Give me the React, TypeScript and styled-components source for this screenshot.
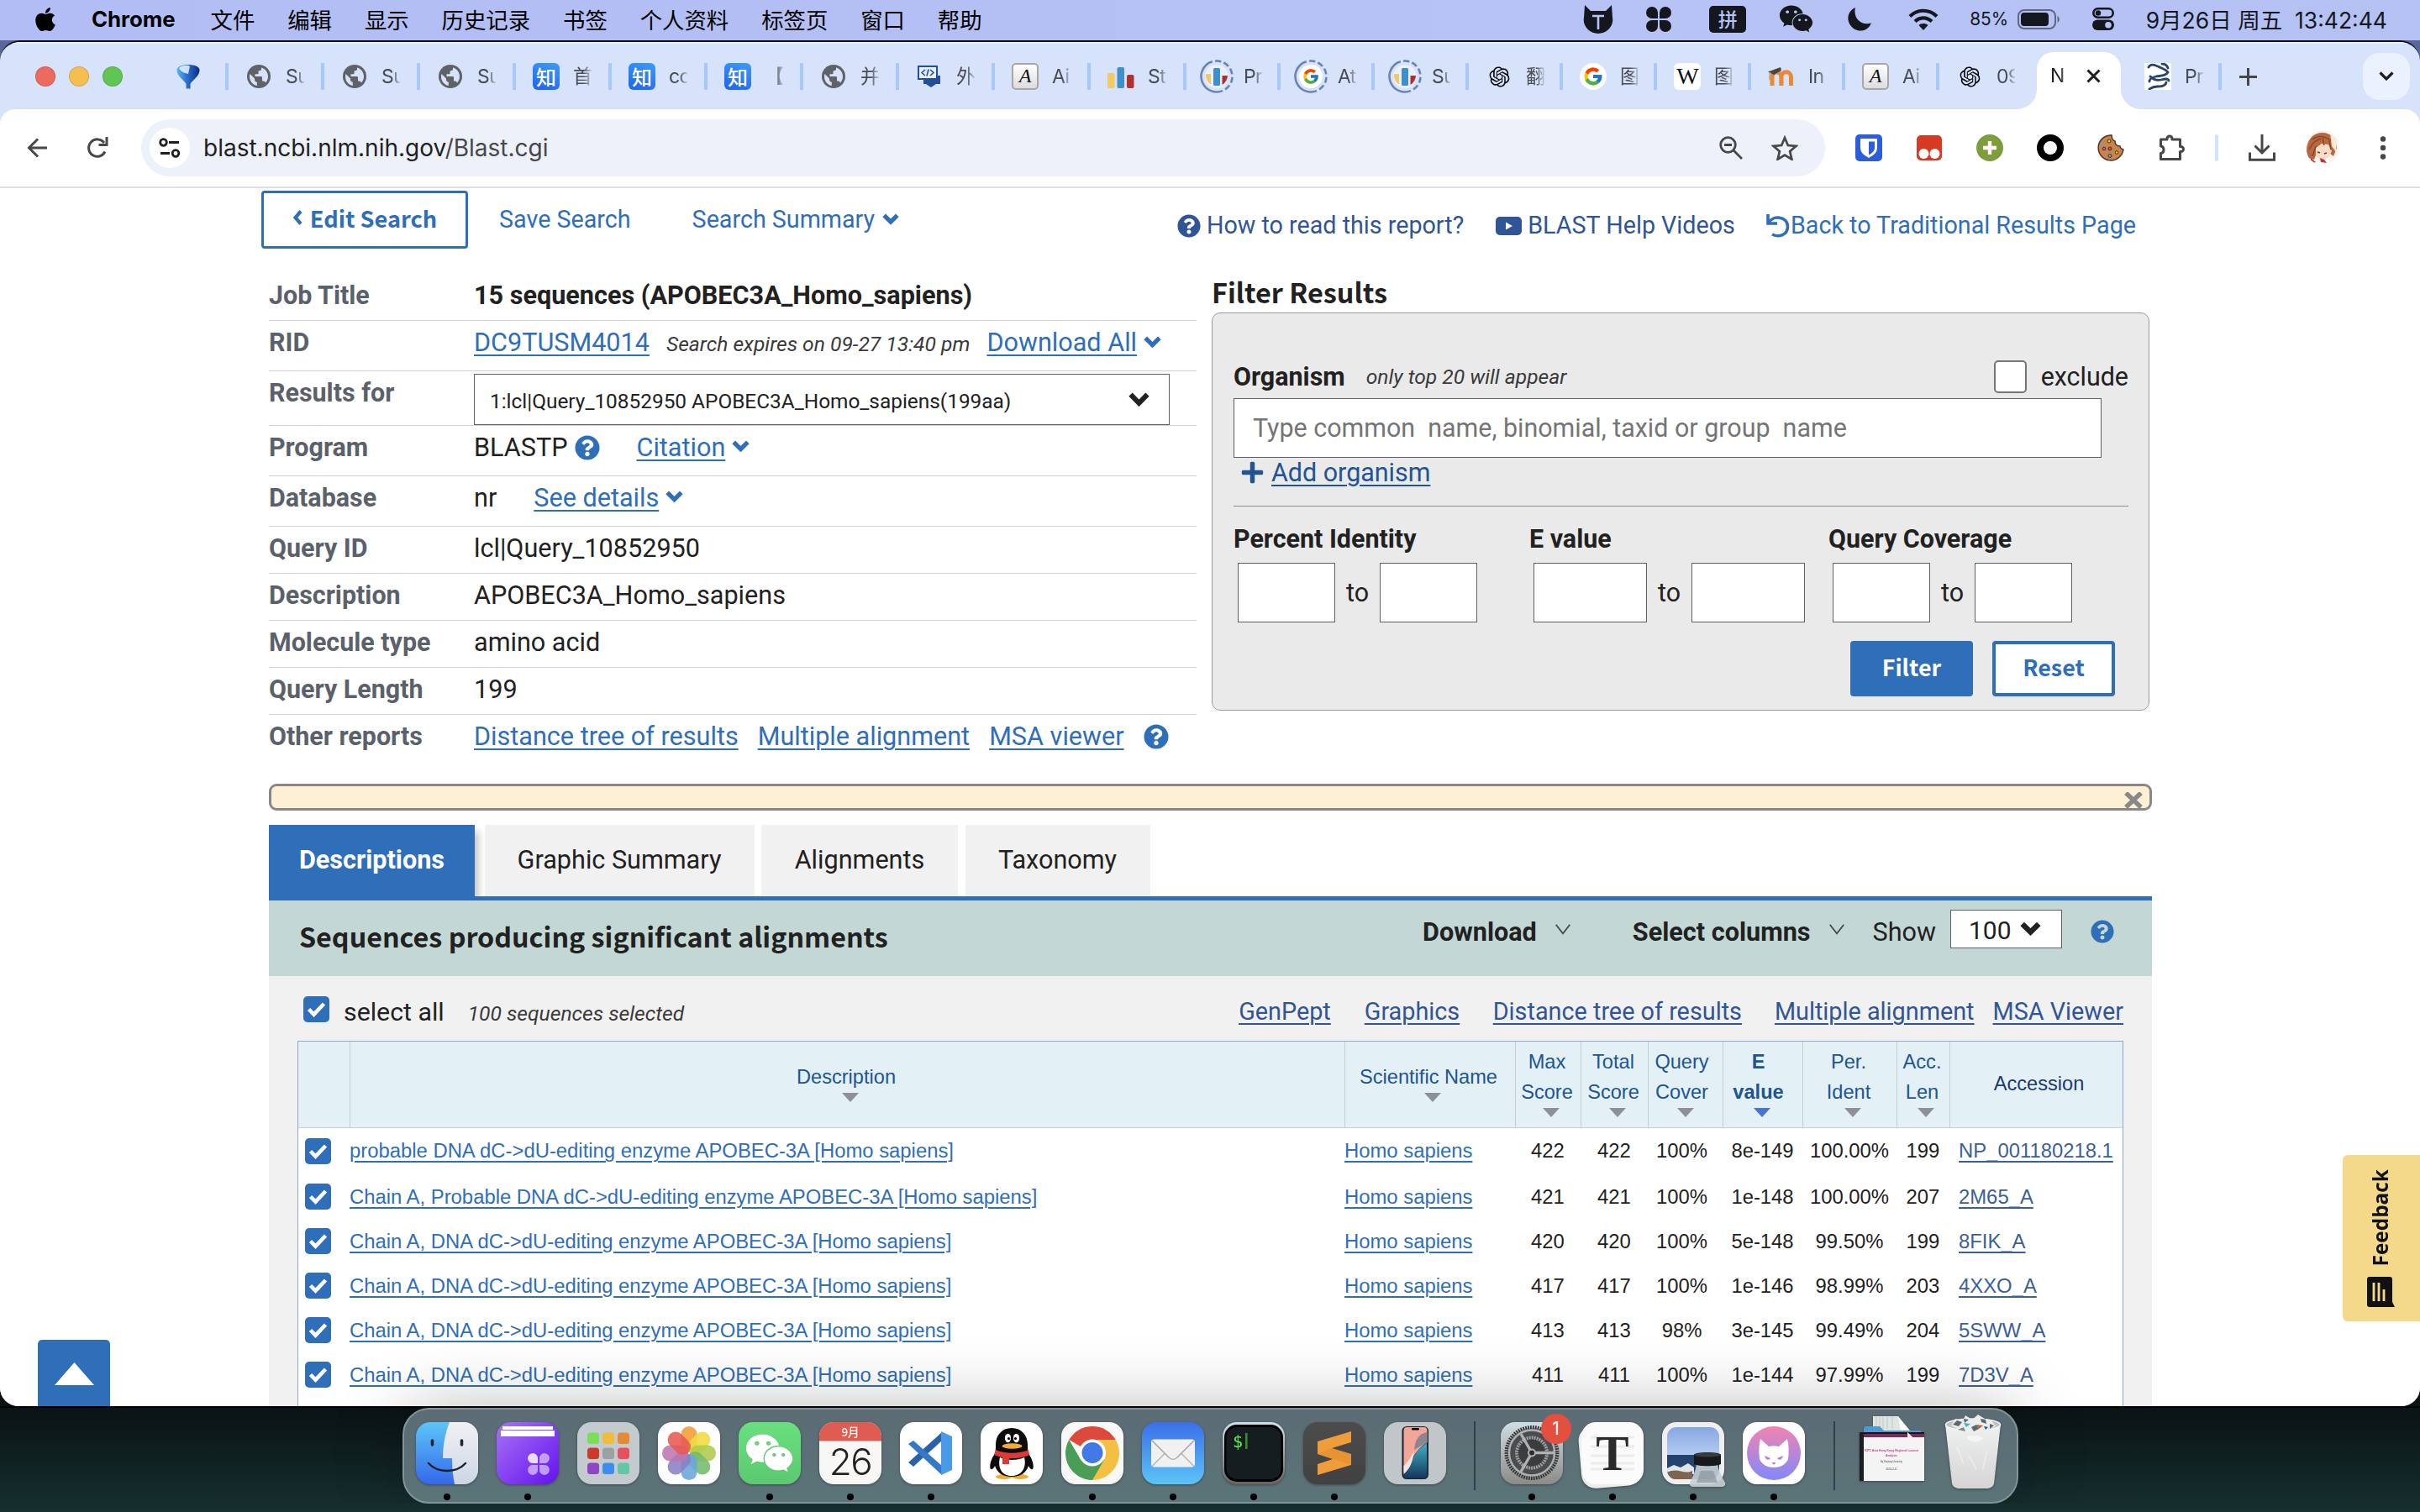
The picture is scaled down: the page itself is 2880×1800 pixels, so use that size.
import React from 'react';
import styled, { createGlobalStyle, css } from 'styled-components';
import { FaApple, FaQuestionCircle, FaWeixin, FaPlus } from 'react-icons/fa';
import { FcGoogle } from 'react-icons/fc';
import { RiOpenaiFill } from 'react-icons/ri';

const BLUE = '#2f6eb8';
const VISITED = '#2f5597';
const ROBOTO = '"Roboto", "Noto Sans CJK SC", sans-serif';
const SYSTEM = '"Inter", "Noto Sans CJK SC", sans-serif';
const HEADING = '"Noto Sans CJK SC", "Open Sans", sans-serif';
const ARIAL = '"Liberation Sans", Arial, sans-serif';

const GlobalStyle = createGlobalStyle`
  *, *::before, *::after { box-sizing: border-box; }
  body { margin: 0; overflow: hidden; font-family: ${ROBOTO}; color: #212121; }
  svg { display: block; flex: none; }
`;

const Desktop = styled.div`
  width: 2880px;
  height: 1800px;
  display: flex;
  flex-direction: column;
  overflow: hidden;
  background: linear-gradient(180deg, #5b679a 0, #5b679a 200px, #05090b 1600px, #0b1517 1690px, #16302f 1800px);
`;

/* ---------- macOS menu bar ---------- */
const MenuBar = styled.header`
  flex: none;
  height: 48px;
  padding: 0 39px 3px 38px;
  display: flex;
  align-items: center;
  justify-content: space-between;
  background: linear-gradient(90deg, #b1bdf4, #b7c3f4 70%, #b5c1f3);
  font: 26.4px ${SYSTEM};
  color: #000;
  white-space: pre;
`;
const Menus = styled.nav`
  display: flex;
  align-items: center;
  gap: 38.9px;
`;
const AppName = styled.strong`
  font-weight: 700;
  font-size: 25.8px;
  margin: 0 3px 0 0;
`;
const Status = styled.div`
  display: flex;
  align-items: center;
  color: #15171f;
`;
const StatusItem = styled.span<{ $gap: number; $size?: number }>`
  margin-left: ${p => p.$gap}px;
  font-size: ${p => p.$size ?? 26.4}px;
`;
const InputMethod = styled.span`
  margin-left: 45px;
  width: 44px;
  height: 32px;
  border-radius: 5px;
  background: #15171f;
  color: #b7c3f4;
  font: 500 23px/30px "Noto Sans CJK SC", sans-serif;
  text-align: center;
`;

/* ---------- browser window ---------- */
const Window = styled.main`
  flex: none;
  height: 1626px;
  display: flex;
  flex-direction: column;
  overflow: hidden;
  position: relative;
  border-top: 2px solid #0b0d14;
  border-radius: 24px 24px 22px 22px;
  background: #d7e2fb;
`;
const TabStrip = styled.div`
  flex: none;
  height: 80px;
  padding-left: 42px;
  display: flex;
  align-items: center;
  border-top: 2px solid #e9f0fd;
`;
const Lights = styled.div`
  display: flex;
  gap: 16px;
`;
const Light = styled.i<{ $color: string }>`
  width: 24px;
  height: 24px;
  border-radius: 50%;
  background: ${p => p.$color};
  box-shadow: inset 0 0 0 1px rgba(0, 0, 0, 0.12);
`;
const PinnedTab = styled.div`
  margin: 0 28px 0 62px;
  width: 32px;
`;
const tabBase = css`
  height: 32px;
  display: flex;
  align-items: center;
  flex: none;
`;
const Tab = styled.div<{ $wide?: boolean; $first?: boolean }>`
  ${tabBase}
  width: ${p => (p.$wide ? 114 : 112)}px;
  padding-left: 20px;
  gap: 16px;
  border-left: 4px solid ${p => (p.$first ? 'transparent' : '#a8c7fa')};
`;
const Favicon = styled.span`
  width: 32px;
  height: 32px;
  display: flex;
  align-items: center;
  justify-content: center;
`;
const TabTitle = styled.span<{ $strong?: boolean }>`
  width: 22px;
  overflow: hidden;
  white-space: nowrap;
  font: 23px/32px ${SYSTEM};
  letter-spacing: -0.6px;
  color: ${p => (p.$strong ? '#1f1f1f' : '#474b52')};
  mask-image: linear-gradient(90deg, #000 55%, rgba(0, 0, 0, 0.15) 100%);
`;
const ActiveTab = styled.div`
  flex: none;
  position: relative;
  align-self: flex-end;
  width: 100px;
  height: 68px;
  margin: 0 4px 0 8px;
  padding: 0 24px 12px 16px;
  display: flex;
  align-items: center;
  justify-content: space-between;
  border-radius: 20px 20px 0 0;
  background: #fff;
  &::before, &::after {
    content: '';
    position: absolute;
    bottom: 0;
    width: 24px;
    height: 24px;
  }
  &::before { right: 100%; background: radial-gradient(circle at 0 0, transparent 23.5px, #fff 24.5px); }
  &::after { left: 100%; background: radial-gradient(circle at 100% 0, transparent 23.5px, #fff 24.5px); }
`;
const NewTab = styled.div`
  ${tabBase}
  border-left: 4px solid #a8c7fa;
  padding-left: 21px;
`;
const TabSearch = styled.div`
  margin: 0 12px 0 auto;
  width: 56px;
  height: 56px;
  border-radius: 20px;
  background: #ebf2fd;
  display: flex;
  align-items: center;
  justify-content: center;
`;
const Toolbar = styled.div`
  flex: none;
  height: 94px;
  padding: 0 8px;
  display: flex;
  align-items: center;
  border-bottom: 2px solid #dfe1e3;
  border-radius: 18px 18px 0 0;
  background: #fff;
`;
const ToolButton = styled.span<{ $w?: number }>`
  flex: none;
  width: ${p => p.$w ?? 72}px;
  display: flex;
  justify-content: center;
`;
const Omnibox = styled.div`
  flex: none;
  width: 2004px;
  height: 68px;
  margin: 0 16px;
  padding: 0 16px 0 10px;
  display: flex;
  align-items: center;
  border-radius: 34px;
  background: #edf1fa;
`;
const SiteInfo = styled.span`
  width: 48px;
  height: 48px;
  border-radius: 50%;
  background: #fff;
  display: flex;
  align-items: center;
  justify-content: center;
`;
const Url = styled.span`
  flex: 1;
  margin-left: 16px;
  font: 28px ${SYSTEM};
  color: #1f1f1f;
  span { color: #474747; }
`;
const ToolDivider = styled.i`
  width: 4px;
  height: 32px;
  margin: 0 16px;
  border-radius: 2px;
  background: #d3e3fd;
`;

/* ---------- BLAST page ---------- */
const Page = styled.div`
  flex: 1;
  min-height: 0;
  overflow: hidden;
  padding: 3px 319px 0 320px;
  display: flex;
  flex-direction: column;
  background: #fff;
`;
const ActionRow = styled.div`
  flex: none;
  height: 99px;
  margin-left: -9px;
  display: flex;
  align-items: flex-start;
  font-size: 28.7px;
  line-height: 69px;
  color: ${BLUE};
`;
const EditSearch = styled.button`
  width: 246px;
  height: 69px;
  padding: 0 0 5px;
  display: flex;
  align-items: center;
  justify-content: center;
  gap: 9px;
  border: 3px solid ${BLUE};
  border-radius: 4px;
  background: #fff;
  color: ${BLUE};
  font: 700 27.2px ${HEADING};
`;
const Action = styled.a<{ $gap: number }>`
  display: flex;
  align-items: center;
  gap: 9px;
  margin-left: ${p => p.$gap}px;
  svg { margin-bottom: 2px; }
`;
const HelpLinks = styled.div`
  margin: 7px 19px 0 auto;
  display: flex;
`;
const HelpLink = styled.a<{ $gap?: number; $left?: number; $color: string }>`
  display: flex;
  align-items: center;
  gap: ${p => p.$gap ?? 7}px;
  margin-left: ${p => p.$left ?? 0}px;
  color: ${p => p.$color};
`;
const Columns = styled.div`
  flex: none;
  height: 607px;
  display: grid;
  grid-template-columns: 1104px 1116px;
  column-gap: 18px;
`;
const Summary = styled.dl`
  margin: 0;
  font-size: 30.6px;
`;
const SummaryRow = styled.div<{ $h: number; $last?: boolean }>`
  height: ${p => p.$h}px;
  padding-top: 7px;
  display: flex;
  align-items: flex-start;
  line-height: 37px;
  border-bottom: ${p => (p.$last ? 0 : 1)}px solid #cfd1d3;
`;
const Label = styled.dt`
  width: 244px;
  font-weight: 700;
  font-size: 30.45px;
  color: #5b616b;
`;
const Value = styled.dd<{ $bold?: boolean }>`
  margin: 0;
  display: flex;
  font-weight: ${p => (p.$bold ? 700 : 400)};
  white-space: nowrap;
`;
const underline = css`
  text-decoration: underline;
  text-decoration-thickness: 2px;
  text-underline-offset: 4px;
`;
const Link = styled.a<{ $gap?: number; $color?: string }>`
  ${underline}
  margin-left: ${p => p.$gap ?? 0}px;
  color: ${p => p.$color ?? BLUE};
`;
const Note = styled.em<{ $gap: number; $drop?: number }>`
  margin-left: ${p => p.$gap}px;
  padding-top: ${p => p.$drop ?? 0}px;
  font-size: 24.65px;
  color: #3a3a3a;
`;
const Mark = styled.span<{ $gap: number; $lift?: number }>`
  display: flex;
  align-items: center;
  margin-left: ${p => p.$gap}px;
  padding-bottom: ${p => p.$lift ?? 0}px;
  color: ${BLUE};
`;
const QuerySelect = styled.div`
  width: 828px;
  height: 61px;
  margin-top: -4px;
  padding: 4px 23px 0 18px;
  display: flex;
  align-items: center;
  justify-content: space-between;
  border: 1px solid #5b616b;
  background: #fff;
  font-size: 24.4px;
  svg { margin-bottom: 4px; }
`;
const FilterHeading = styled.h2`
  margin: 0;
  height: 46px;
  font: 700 32.4px/41px ${HEADING};
`;
const FilterPanel = styled.section`
  height: 474px;
  padding: 55px 24px 0 25px;
  border: 1px solid #999b9d;
  border-radius: 10px;
  background: #eaeaea;
  font-size: 30.45px;
`;
const OrganismRow = styled.div`
  height: 46px;
  display: flex;
  align-items: flex-start;
  line-height: 42px;
`;
const Exclude = styled.label`
  margin-left: auto;
  display: flex;
  gap: 17px;
`;
const EmptyCheck = styled.i`
  width: 39px;
  height: 39px;
  margin-top: 1px;
  border: 2px solid #767676;
  border-radius: 5px;
  background: #fff;
`;
const Field = styled.div<{ $w: number }>`
  width: ${p => p.$w}px;
  height: 71px;
  padding-left: 22px;
  border: 1px solid #5b616b;
  background: #fff;
  color: #757575;
  line-height: 70px;
  white-space: pre;
`;
const AddOrganism = styled.div`
  height: 58px;
  padding: 0 0 23px 8px;
  display: flex;
  align-items: center;
  gap: 8px;
  color: #205493;
  border-bottom: 1px solid #8c8d8f;
`;
const Ranges = styled.div`
  display: grid;
  grid-template-columns: 352px 356px 1fr;
  padding-top: 20px;
`;
const RangeLabel = styled.div`
  height: 47px;
  line-height: 37px;
  font-weight: 700;
`;
const RangeInputs = styled.div`
  display: flex;
  align-items: center;
  gap: 13px;
  padding-left: 5px;
`;
const PanelButtons = styled.div`
  margin: 22px 16px 0 0;
  display: flex;
  justify-content: flex-end;
  gap: 23px;
`;
const PanelButton = styled.button<{ $solid?: boolean }>`
  width: 146px;
  height: 66px;
  padding: 0 0 6px;
  border: 4px solid ${BLUE};
  border-radius: 4px;
  background: ${p => (p.$solid ? BLUE : '#fff')};
  color: ${p => (p.$solid ? '#fff' : BLUE)};
  font: 700 26.9px ${HEADING};
`;
const Notice = styled.div`
  flex: none;
  height: 32px;
  margin-bottom: 17px;
  padding: 7px 8px 0 0;
  display: flex;
  justify-content: flex-end;
  border: 3px solid #888;
  border-radius: 9px;
  background: #fdf0d5;
`;
const ResultTabs = styled.div`
  flex: none;
  height: 90px;
  display: flex;
  gap: 8.5px;
  border-bottom: 5px solid ${BLUE};
  font-size: 30.6px;
`;
const ResultTab = styled.div<{ $w: number; $active?: boolean }>`
  width: ${p => p.$w}px;
  text-align: center;
  line-height: 84px;
  background: #f1f1f1;
  ${p => p.$active && css`
    margin-right: 3px;
    background: ${BLUE};
    color: #fff;
    font-weight: 700;
    box-shadow: 7px 6px 8px -2px rgba(0, 0, 0, 0.22);
    clip-path: inset(0 -12px 0 0);
  `}
`;
const SectionBar = styled.div`
  flex: none;
  height: 90px;
  padding: 0 45px 16px 36px;
  display: flex;
  align-items: center;
  background: #c3d8d5;
  font-size: 30.6px;
  h2 { margin: 10px auto 0 0; font: 700 32.25px/50px ${HEADING}; }
`;
const BarMenu = styled.b<{ $right: number }>`
  display: flex;
  align-items: center;
  gap: 22px;
  margin-right: ${p => p.$right}px;
  svg { color: #444; margin-bottom: 5px; }
`;
const ShowSelect = styled.div`
  width: 133px;
  height: 46px;
  margin: -7px 34px 0 17px;
  padding: 4px 0 0 21px;
  display: flex;
  align-items: center;
  gap: 10px;
  border: 1px solid #5b616b;
  background: #fff;
  font-size: 30px;
  svg { margin-bottom: 4px; }
`;
const ResultsPanel = styled.section`
  flex: 1;
  min-height: 0;
  padding: 0 34px;
  display: flex;
  flex-direction: column;
  background: #f1f1f1;
`;
const SelectRow = styled.div`
  flex: none;
  height: 77px;
  padding: 24px 0 0 7px;
  display: flex;
  align-items: flex-start;
  line-height: 38px;
  font-size: 30.3px;
`;
const SelectLabel = styled.span`
  margin-left: 17px;
`;
const ViewLinks = styled.nav`
  margin-left: auto;
  display: flex;
  font-size: 28.8px;
  line-height: 37px;
`;
const ResultTable = styled.div`
  flex: 1;
  border: 1px solid #8fa9c9;
  border-bottom: 0;
  background: #fff;
  font: 23.85px ${ARIAL};
`;
const tableGrid = css`
  display: grid;
  grid-template-columns: 61px 1184px 203px 78px 80px 89px 95px 112px 63px 206px;
`;
const HeadRow = styled.div`
  ${tableGrid}
  height: 103px;
  background: #e3f1f6;
  border-bottom: 1px solid #c9d5da;
  font-size: 23.6px;
`;
const HeadCell = styled.div<{ $top: number; $right?: number; $left?: number; $bold?: boolean; $color?: string }>`
  display: flex;
  flex-direction: column;
  align-items: center;
  padding: ${p => p.$top}px ${p => p.$right ?? 3}px 0 ${p => p.$left ?? 0}px;
  border-left: 1px solid #c6cdd2;
  line-height: 36px;
  text-align: center;
  white-space: pre;
  color: ${p => p.$color ?? '#205493'};
  font-weight: ${p => (p.$bold ? 700 : 400)};
  &:first-child { border-left: 0; }
`;
const SortArrow = styled.i<{ $active?: boolean }>`
  margin: 1px 0 0 9px;
  border: 10px solid transparent;
  border-top: 11px solid ${p => (p.$active ? '#4773d2' : '#8e9099')};
  border-bottom: 0;
`;
const BodyRow = styled.div`
  ${tableGrid}
  height: 53px;
  align-items: center;
  &:nth-child(2) { height: 55px; padding-bottom: 1px; }
`;
const Num = styled.span<{ $shift?: number }>`
  text-align: center;
  padding-right: ${p => p.$shift ?? 0}px;
`;
const AccessionCell = styled.span`
  padding-left: 11px;
`;
const CheckBox = styled.span<{ $left?: number }>`
  width: 31px;
  height: 31px;
  margin-left: ${p => p.$left ?? 0}px;
  border-radius: 5px;
  background: ${BLUE};
  display: flex;
  align-items: center;
  justify-content: center;
`;
const Feedback = styled.div`
  position: absolute;
  right: 0;
  top: 1325px;
  width: 92px;
  height: 198px;
  padding: 17px 2px 0 0;
  display: flex;
  flex-direction: column;
  align-items: center;
  gap: 13px;
  border-radius: 6px 0 0 6px;
  background: #f5d98b;
  color: #111;
  span {
    writing-mode: vertical-rl;
    transform: rotate(180deg);
    font: 700 24.4px/34px "Open Sans", sans-serif;
  }
`;
const ToTop = styled.div`
  position: absolute;
  left: 45px;
  bottom: 0;
  width: 86px;
  height: 79px;
  padding: 27px 0 0 20px;
  border-radius: 5px 5px 0 0;
  background: ${BLUE};
`;

/* ---------- dock ---------- */
const DockArea = styled.div`
  flex: 1;
  display: flex;
  justify-content: center;
  align-items: flex-start;
  border-top: 2px solid #000;
`;
const Dock = styled.div`
  position: relative;
  z-index: 2;
  width: 1923px;
  height: 114px;
  padding: 0 0 0 14px;
  display: flex;
  border: 2px solid #82949a;
  border-radius: 32px;
  background: linear-gradient(180deg, #5c6c74, #5a7478);
  box-shadow: 0 0 90px -8px rgba(0, 0, 0, 0.32);
  clip-path: inset(-140px -140px 0 -140px);
`;
const DockItem = styled.div<{ $running?: boolean; $gap?: number }>`
  position: relative;
  flex: none;
  width: 74px;
  margin-right: ${p => p.$gap ?? 22}px;
  padding-top: 15px;
  &::after {
    content: '';
    display: ${p => (p.$running ? 'block' : 'none')};
    width: 8px;
    height: 8px;
    margin: 11px auto 0;
    border-radius: 50%;
    background: #000;
  }
  svg { overflow: visible; filter: drop-shadow(0 1px 1.5px rgba(0, 0, 0, 0.35)); }
`;
const Badge = styled.span`
  position: absolute;
  left: 48px;
  top: 5px;
  width: 36px;
  height: 36px;
  border-radius: 50%;
  background: #e3503f;
  color: #fff;
  font: 21px/36px ${SYSTEM};
  text-align: center;
`;
const DockDivider = styled.i<{ $right: number; $left: number }>`
  width: 2px;
  height: 82px;
  margin: 14px ${p => p.$right}px 0 ${p => p.$left}px;
  background: #2c434c;
`;

/* ---------- small drawings ---------- */
const Chevron = ({ w = 20, s = 5.2 }: { w?: number; s?: number }) => (
  <svg width={w} height={w * 0.7} viewBox={`0 0 ${w} ${w * 0.7}`}>
    <path d={`M${s / 2.4} ${s / 2.2}L${w / 2} ${w * 0.7 - s / 1.3}L${w - s / 2.4} ${s / 2.2}`} fill="none" stroke="currentColor" strokeWidth={s} />
  </svg>
);
const Help = ({ s = 31 }: { s?: number }) => <FaQuestionCircle size={s} />;
const Tick = () => (
  <svg width="31" height="31" viewBox="0 0 31 31"><path d="M6.5 15.5l6 6.2L24.5 9" fill="none" stroke="#fff" strokeWidth="4.6" /></svg>
);
const Globe = () => (
  <svg width="28" height="28" viewBox="0 0 28 28">
    <circle cx="14" cy="14" r="14" fill="#5f6368" />
    <path d="M3 14c0-1 .2-2 .5-3L9 16.5V18c0 1.500 1.200 2.800 2.800 2.800V25C6.700 24 3 19.500 3 14zM17 3.600c4.500 1.200 8 5.500 8 10.400 0 2.900-1.100 5.600-3 7.500-.4-1.200-1.400-2-2.700-2H18v-4c0-.8-.6-1.400-1.400-1.400H9.500v-2.800h2.700c.8 0 1.400-.6 1.400-1.400V7.200h1.400c1.100 0 2-.9 2-2z" fill="#d7e2fb" />
  </svg>
);
const ZhiBox = styled.span`
  width: 32px;
  height: 32px;
  border-radius: 6px;
  background: linear-gradient(200deg, #3d9bf8, #1f63ef);
  color: #fff;
  font: 500 24px/31px "Noto Sans CJK SC", sans-serif;
  text-align: center;
`;
const ScriptBox = styled.span`
  width: 32px;
  height: 32px;
  border: 2px solid #a7a7a7;
  border-radius: 5px;
  background: linear-gradient(#fff, #ddd);
  color: #111;
  font: italic 24px/27px "Liberation Serif", serif;
  text-align: center;
`;
const WikiBox = styled.span`
  width: 32px;
  height: 32px;
  border-radius: 6px;
  background: #fff;
  color: #111;
  font: 28px/32px "Liberation Serif", serif;
  display: flex;
  justify-content: center;
  letter-spacing: -1px;
`;
const Bars = () => (
  <svg width="32" height="32" viewBox="0 0 32 32">
    <rect x="0" y="12" width="8.500" height="18" rx="2" fill="#f0cb63" />
    <rect x="11.500" y="5" width="8.500" height="25" rx="2" fill="#3f8fcb" />
    <rect x="23" y="14" width="8.500" height="16" rx="2" fill="#b02f2f" />
  </svg>
);
const Ringed = ({ google }: { google?: boolean }) => (
  <svg width="40" height="40" viewBox="0 0 40 40">
    <circle cx="20" cy="20" r="18.500" fill="none" stroke="#6a82b4" strokeWidth="2.600" strokeDasharray="46 3.500 7 3.500 7 3.500 7 3.500 7 3.500 7 3.500 14 0" transform="rotate(110 20 20)" />
    <circle cx="20" cy="20" r="14" fill={google ? '#fff' : '#e9effc'} />
    {google ? <g transform="translate(9.500 9.500)"><FcGoogle size={21} /></g> : (
      <g>
        <path d="M7 17h6v12.500a14 14 0 0 1-6-9z" fill="#f0cb63" />
        <rect x="16" y="10" width="8" height="21" rx="1.500" fill="#3f8fcb" />
        <path d="M26.500 19h6.500a14 14 0 0 1-6.500 11z" fill="#b02f2f" />
      </g>
    )}
  </svg>
);
const DevChat = () => (
  <svg width="32" height="32" viewBox="0 0 32 32">
    <path d="M9 16h20v10h-5l-6 4-6-4H9z" fill="#224f9c" transform="translate(0 -1)" />
    <rect x="3" y="4" width="22" height="15" fill="#e8effc" stroke="#224f9c" strokeWidth="2" />
    <path d="M11 8l-4 3.500L11 15M17 8l4 3.500L17 15M15 7.500L13 15.500" fill="none" stroke="#224f9c" strokeWidth="1.600" />
  </svg>
);
const Moodle = () => (
  <svg width="32" height="32" viewBox="0 0 32 32">
    <path d="M5 27V16.500a5.200 5.200 0 0 1 10.800 0V27M16 27V16.500a5.500 5.500 0 0 1 11.500 0V27" fill="none" stroke="#e88a35" strokeWidth="5" />
    <path d="M0 10.500L15 5l1 4-9 5z" fill="#4a4644" /><path d="M2 11v9" stroke="#b9a48c" strokeWidth="1.500" />
  </svg>
);
const Helix = () => (
  <svg width="32" height="32" viewBox="0 0 32 32">
    <rect width="32" height="32" fill="#fff" />
    <path d="M5 5c2-4 7-3 11-1s9 3 12 7M28 11c-3 5-9 4-14 5s-8 3-8 6M7 16c4 4 9 5 13 4s8-2 9 1M26 23c-1 5-7 5-11 5s-6 1-9 3M21 1c3 0 6 2 7 5" fill="none" stroke="#2b4468" strokeWidth="2.800" strokeLinecap="round" />
  </svg>
);
const Pin = () => (
  <svg width="32" height="32" viewBox="0 0 32 32">
    <defs><linearGradient id="pin" x2="1"><stop stopColor="#5fb2f2" /><stop offset=".45" stopColor="#2a6fd0" /><stop offset="1" stopColor="#0a2c80" /></linearGradient></defs>
    <path d="M2.500 8C3 0 29 0 29.500 8c.5 7-8 12-11 17v5.500h-5V25C10.500 20 2 15 2.500 8z" fill="url(#pin)" />
    <path d="M5 6C8 2.500 15 2 18 3.500L16 13c-5-1-9-3-11-7z" fill="#e6f4ff" opacity=".85" />
  </svg>
);

type Fav = React.ReactNode;
const google: Fav = <svg width="32" height="32" viewBox="0 0 32 32"><circle cx="16" cy="16" r="16" fill="#fff" /><g transform="translate(3.500 3.500)"><FcGoogle size={25} /></g></svg>;
const openai: Fav = <RiOpenaiFill size={29} color="#0b0b0b" />;
const tabs: [Fav, string][] = [
  [<Globe />, 'Su'], [<Globe />, 'Su'], [<Globe />, 'Su'],
  [<ZhiBox>知</ZhiBox>, '首'], [<ZhiBox>知</ZhiBox>, 'cc'], [<ZhiBox>知</ZhiBox>, '【'],
  [<Globe />, '并'], [<DevChat />, '外'], [<ScriptBox>A</ScriptBox>, 'Ai'], [<Bars />, 'St'],
  [<Ringed />, 'Pr'], [<Ringed google />, 'At'], [<Ringed />, 'Su'],
  [openai, '翻'], [google, '图'], [<WikiBox>W</WikiBox>, '图'], [<Moodle />, 'In'],
  [<ScriptBox>A</ScriptBox>, 'Ai'], [openai, '09'],
];

/* ---------- dock icons ---------- */
const Tile = ({ fill, children }: { fill: string; children?: React.ReactNode }) => (
  <svg width="74" height="74" viewBox="0 0 74 74"><rect width="74" height="74" rx="17" fill={fill} />{children}</svg>
);
const Grad = ({ id, a, b, diag }: { id: string; a: string; b: string; diag?: boolean }) => (
  <linearGradient id={id} x1="0" y1="0" x2={diag ? '1' : '0'} y2="1"><stop stopColor={a} /><stop offset="1" stopColor={b} /></linearGradient>
);
const DockDefs = () => (
  <svg width="0" height="0">
    <defs>
      <Grad id="finder" a="#5cc6f8" b="#3568ea" /><Grad id="purple" a="#a873f5" b="#6312ee" diag />
      <Grad id="wechat" a="#69e07e" b="#5bc970" /><Grad id="mail" a="#3b6fe9" b="#5cc4f7" />
      <Grad id="cat" a="#f283b0" b="#8189fb" /><Grad id="gear" a="#cfdde5" b="#8d8b88" />
      <Grad id="sky" a="#7f9fe0" b="#b5cdf2" /><Grad id="subl" a="#4c4c4c" b="#414141" />
      <Grad id="wave" a="#3fb3c8" b="#14365c" /><Grad id="term" a="#cfe1ea" b="#6b625f" />
      <Grad id="trash" a="#eff0f0" b="#d4d5d4" /><Grad id="face" a="#f1f1f3" b="#cdd6e6" />
    </defs>
  </svg>
);
const Finder = () => (
  <Tile fill="url(#finder)">
    <path d="M40 0h17a17 17 0 0 1 17 17v40a17 17 0 0 1-17 17H46c-2-10-3-20-3-31H32C32 28 35 12 40 0z" fill="url(#face)" />
    <path d="M19.500 22v5M54.500 22v5" stroke="#1c2733" strokeWidth="3.600" strokeLinecap="round" />
    <path d="M15 49c11 12 33 12 44 0" fill="none" stroke="#1b1f27" strokeWidth="2.400" strokeLinecap="round" />
  </Tile>
);
const PurpleNotes = () => (
  <Tile fill="url(#purple)">
    <path d="M7 5h60v4H7zM5 10h64v7H5z" fill="#fff" />
    <g fill="#e9dcff"><path d="M49 49h-5a6 6 0 1 1 5-7z" /><path d="M51 49h5a6 6 0 1 0-5-7z" opacity=".65" /><path d="M49 51h-5a6 6 0 1 0 5 7z" opacity=".65" /><path d="M51 51h5a6 6 0 1 1-5 7z" opacity=".65" /></g>
  </Tile>
);
const Launchpad = () => (
  <Tile fill="#c4cbce">
    {['#7bdf57', '#f2bb3c', '#e78b32', '#cc3a2e', '#9ba0a3', '#e8505f', '#8d45c4', '#3b8ef0', '#62c7a5'].map((c, i) => (
      <rect key={c} x={12 + (i % 3) * 18} y={12.500 + Math.floor(i / 3) * 18} width="14" height="13.500" rx="3.500" fill={c} />
    ))}
  </Tile>
);
const Photos = () => (
  <Tile fill="#fdfdfd">
    {['#f09d37', '#efdc3f', '#aecb4a', '#75bb6e', '#6aa5dc', '#8b80c4', '#bd75b0', '#e65a50'].map((c, i) => (
      <rect key={c} x="27.500" y="5" width="19" height="31" rx="9.500" fill={c} opacity=".88" transform={`rotate(${i * 45} 37 37)`} />
    ))}
  </Tile>
);
const WeChat = () => (
  <Tile fill="url(#wechat)"><g transform="translate(7.500 8)"><FaWeixin size={58} color="#fff" /></g></Tile>
);
const Calendar = () => (
  <Tile fill="#f8f7f6">
    <path d="M0 22.500V17A17 17 0 0 1 17 0h40a17 17 0 0 1 17 17v5.500z" fill="#df5c50" />
    <text x="37" y="17" fontSize="13.500" fontWeight="500" fill="#fff" textAnchor="middle" fontFamily='"Noto Sans CJK SC", sans-serif'>9月</text>
    <text x="37" y="62.500" fontSize="44" fontWeight="300" fill="#222" textAnchor="middle" letterSpacing="-1.500" fontFamily='Inter, sans-serif'>26</text>
  </Tile>
);
const VsCode = () => (
  <Tile fill="#fff">
    <path d="M10 48l6 5 34-31V12z" fill="#2763a5" /><path d="M10 26l6-4 34 30v11z" fill="#3479c6" />
    <path d="M49 11l13 6v40l-13 6z" fill="#4a9ae8" />
  </Tile>
);
const QQ = () => (
  <Tile fill="#fff">
    <ellipse cx="28" cy="65" rx="10" ry="3" fill="#f0ac33" /><ellipse cx="47" cy="65" rx="10" ry="3" fill="#f0ac33" />
    <path d="M37 7c12 0 19 9 19 20 0 5 0 8 2 12 4 6 6 14 4 17-1 1-4-1-5-4-3 9-10 13-20 13s-17-4-20-13c-1 3-4 5-5 4-2-3 0-11 4-17 2-4 2-7 2-12C18 16 25 7 37 7z" fill="#0b0b0b" />
    <path d="M23 42c8 4 21 4 29 0 3 12-3 22-15 22S20 54 23 42z" fill="#fff" />
    <ellipse cx="32.500" cy="19" rx="3.600" ry="5.200" fill="#fff" /><ellipse cx="42.500" cy="19" rx="3.600" ry="5.200" fill="#fff" />
    <circle cx="33.500" cy="19.500" r="1.600" /><circle cx="41.500" cy="19.500" r="1.600" />
    <ellipse cx="37.500" cy="28.500" rx="12" ry="3.200" fill="#f0ac33" />
    <path d="M18 33c11 5 28 5 39 0l1 6c-5 2-10 3.500-15 4H34v7h-8v-8c-4-1-7-2-10-3z" fill="#dd3a35" />
  </Tile>
);
const ChromeIcon = () => (
  <Tile fill="#f8f8f7">
    <path d="M37 37L9.300 21A32 32 0 0 1 64.700 21z" fill="#db4a3d" /><path d="M37 37V21h27.700A32 32 0 0 1 37 69z" fill="#f4c044" />
    <path d="M37 37l14 8-14 24A32 32 0 0 1 9.300 21l14 24z" fill="#4a9d55" />
    <circle cx="37" cy="36.500" r="16" fill="#fff" /><circle cx="37" cy="36.500" r="12.500" fill="#4379e6" />
  </Tile>
);
const Mail = () => (
  <Tile fill="url(#mail)">
    <rect x="11" y="20.500" width="52" height="33" rx="3.500" fill="#f1f1f1" />
    <path d="M12 52.500l15-15M62 52.500l-15-15" stroke="#b5b5b5" strokeWidth="1.400" />
    <path d="M12 22l20 20c3 3 7 3 10 0l20-20" fill="none" stroke="#a9a9a9" strokeWidth="1.600" />
  </Tile>
);
const Terminal = () => (
  <Tile fill="url(#term)">
    <rect x="2" y="3" width="70" height="68" rx="15" fill="#000" /><rect x="4.500" y="6" width="65" height="62" rx="13" fill="#151d20" />
    <text x="12" y="30" fontSize="20" fill="#5ff04b" fontFamily='"DejaVu Sans Mono", monospace'>$</text><rect x="27" y="13" width="2.600" height="19" fill="#3a8a2e" />
  </Tile>
);
const Sublime = () => (
  <Tile fill="url(#subl)">
    <path d="M17 23l40-12v13L34 31l23 7v13L17 63V50l18-6-18-6z" fill="#ef9c3b" /><path d="M34 31l23 7v13L40 45 17 38z" fill="#e08a2a" opacity=".45" />
  </Tile>
);
const Phone = () => (
  <Tile fill="#c1c6c9">
    <rect x="21.500" y="5" width="31.500" height="63" rx="5.500" fill="#15232c" />
    <path d="M23.500 10a4 4 0 0 1 4-4h20a4 4 0 0 1 4 4v14C36 34 30 50 23.500 60z" fill="#f3a698" /><path d="M51 25C38 34 30 46 23.500 62v1a4 4 0 0 0 4 4h20a4 4 0 0 0 4-4z" fill="url(#wave)" />
    <path d="M36 34c-2 16-6 22-12.500 28V52C30 46 33 40 36 34z" fill="#fbe4dd" /><path d="M51.500 12C42 14 37 20 36 33l15.500-9z" fill="#8a8790" /><rect x="33" y="7" width="9" height="2.600" rx="1.300" />
  </Tile>
);
const Settings = () => (
  <Tile fill="url(#gear)">
    <circle cx="37" cy="36.500" r="30" fill="#8f9293" stroke="#303234" strokeWidth="5" strokeDasharray="1.700 1.200" />
    <circle cx="37" cy="36.500" r="27" fill="#4a4c4d" stroke="#aeb2b3" strokeWidth="2.400" />
    <circle cx="37" cy="36.500" r="18" fill="#3a3c3d" stroke="#9da1a2" strokeWidth="4" strokeDasharray="2 1" />
    <path d="M37 36.500h26M37 36.500L24 14M37 36.500L24 59" stroke="#aeb2b3" strokeWidth="3.400" /><circle cx="37" cy="36.500" r="4" fill="#2b2d2e" stroke="#aeb2b3" strokeWidth="2" />
  </Tile>
);
const Typora = () => (
  <svg width="74" height="74" viewBox="0 0 74 74">
    <rect x="-2" y="3" width="72" height="74" rx="17" fill="#eceded" transform="rotate(-5 37 37)" /><rect width="74" height="74" rx="17" fill="#fbfbfb" />
    <path d="M11 18h52M11 29h52M11 40h52M11 49h52M11 56h52" stroke="#ececec" strokeWidth="3" />
    <text x="37" y="57" fontSize="59" fontWeight="700" fill="#2a2a2a" textAnchor="middle" fontFamily='"Liberation Serif", serif'>T</text>
  </svg>
);
const Preview = () => (
  <Tile fill="#efefef">
    <clipPath id="photo"><rect x="6" y="6" width="62" height="62" rx="11" /></clipPath>
    <g clipPath="url(#photo)"><rect width="74" height="40" fill="url(#sky)" /><rect y="39" width="74" height="30" fill="#26436f" /><path d="M6 55l8-4 8 3 9-5 7 5v8H6z" fill="#dfe6ee" /><path d="M6 60c12-7 20 3 30-2v12H6z" fill="#7c6650" /></g>
    <path d="M41 50h25c1 8 6 16 9 22 1 3-1 5-4 5H37c-3 0-5-2-4-5 3-6 7-14 8-22z" fill="#c6cfd5" opacity=".9" /><path d="M46 58l-5 14h25l-5-14z" fill="#8a969e" opacity=".7" />
    <path d="M38 39c0-4 32-4 32 0v11c-5 3-27 3-32 0z" fill="#17191a" /><ellipse cx="54" cy="39" rx="15" ry="2.600" fill="#3a3c3d" />
  </Tile>
);
const CatIcon = () => (
  <Tile fill="#fff">
    <circle cx="37" cy="37" r="32" fill="url(#cat)" />
    <path d="M21 20l10 9c4-1 8-1 12 0l10-9c2 8 2 16 1 24-3 7-10 10-17 10s-14-3-17-10c-1-8-1-16 1-24z" fill="#fff" />
    <path d="M26 40l7 3c-2 3-6 2-7-3zM48 40l-7 3c2 3 6 2 7-3z" fill="#b27ce0" /><path d="M34.500 48h5L37 51z" fill="#b27ce0" />
  </Tile>
);
const Papers = () => (
  <svg width="78" height="74" viewBox="0 0 78 74">
    <path d="M16-7h30l14 24H16z" fill="#dfe6e2" /><path d="M20-6v14M24-6v14M28-6v14M33-6v14M39-6v14" stroke="#b9c9c0" /><path d="M46-7l14 17H49z" fill="#fff" />
    <path d="M5 8q0-3 3-3h16l5 5h42q3 0 3 3v6H5z" fill="#4f9ad4" />
    <path d="M0 12h5v58H0z" fill="#1d1d1f" /><rect x="5" y="12" width="72" height="58" fill="#f5f4f4" /><rect x="5" y="12" width="72" height="6" fill="#7c2a57" /><rect x="5" y="12" width="72" height="2" fill="#1b1518" />
    <text x="38" y="35" fontSize="3.400" fontWeight="700" fill="#c13a80" textAnchor="middle" fontFamily='"Liberation Sans", sans-serif'>ICPC Asia Hong Kong Regional Contest</text>
    <text x="38" y="40.500" fontSize="3.400" fontWeight="700" fill="#c13a80" textAnchor="middle" fontFamily='"Liberation Sans", sans-serif'>Analysis</text>
    <text x="38" y="48" fontSize="2.600" fill="#444" textAnchor="middle" fontFamily='"Liberation Sans", sans-serif'>By Zhejiang University</text>
    <text x="38" y="57" fontSize="2.600" fill="#444" textAnchor="middle" fontFamily='"Liberation Sans", sans-serif'>2024-12-22</text>
    <path d="M57 12v20c6 2 14 1 20 0z" fill="#fff" /><path d="M57 12v20h20z" fill="#ececec" opacity=".6" />
  </svg>
);
const Trash = () => (
  <svg width="66" height="74" viewBox="0 0 66 74">
    <path d="M0 2h66l-8 71c-1 4-5 6-9 6H17c-4 0-8-2-9-6z" fill="url(#trash)" />
    <ellipse cx="33" cy="3" rx="32.500" ry="7" fill="#bfc3c3" stroke="#f4f5f5" strokeWidth="1.500" />
    <path d="M7 4l5-8 9 2 3-6 8 5 7-6 8 5 7 1 6 8-12 5-16 2-16-3z" fill="#eceded" />
    <path d="M9 3l5-5 6 2-4 5zM22-4l6 1-5 4zM31 6l6-3 3 5-6 3zM42-4l6 1 1 5-6-2zM53 2l5 2-5 4z" fill="#5b6972" />
    <path d="M22 1l8 1-5 4z" fill="#47b3c4" /><path d="M37 3l8 1-5 4z" fill="#b0683a" /><path d="M46 5l5 1-3 3z" fill="#34508c" /><path d="M15 9l7-3 2 5z" fill="#7d888e" />
    <path d="M25 17c5 8 14 9 21 2l-6-3z" fill="#fff" opacity=".55" /><path d="M14 30l8 20M50 34l-6 24M28 40l9 16" stroke="#fff" strokeWidth="2" opacity=".35" />
  </svg>
);

/* ---------- data ---------- */
const headers: { t: string; top: number; right?: number; bold?: boolean }[] = [
  { t: 'Description', top: 24 }, { t: 'Scientific Name', top: 24, right: 4 },
  { t: 'Max\nScore', top: 6 }, { t: 'Total\nScore', top: 6 }, { t: 'Query\nCover', top: 6, right: 9 },
  { t: 'E\nvalue', top: 6, right: 11, bold: true }, { t: 'Per.\nIdent', top: 6 }, { t: 'Acc.\nLen', top: 6, right: 3 },
];
const chainA = 'Chain A, DNA dC->dU-editing enzyme APOBEC-3A [Homo sapiens]';
const hits = [
  ['probable DNA dC->dU-editing enzyme APOBEC-3A [Homo sapiens]', '422', '100%', '8e-149', '100.00%', '199', 'NP_001180218.1'],
  ['Chain A, Probable DNA dC->dU-editing enzyme APOBEC-3A [Homo sapiens]', '421', '100%', '1e-148', '100.00%', '207', '2M65_A'],
  [chainA, '420', '100%', '5e-148', '99.50%', '199', '8FIK_A'],
  [chainA, '417', '100%', '1e-146', '98.99%', '203', '4XXO_A'],
  [chainA, '413', '98%', '3e-145', '99.49%', '204', '5SWW_A'],
  [chainA, '411', '100%', '1e-144', '97.99%', '199', '7D3V_A'],
];
const ranges: [string, number][] = [['Percent Identity', 116], ['E value', 135], ['Query Coverage', 116]];

const Ico = ({ children, w = 32, h = 32, vb }: { children: React.ReactNode; w?: number; h?: number; vb?: string }) => (
  <svg width={w} height={h} viewBox={vb ?? `0 0 ${w} ${h}`} fill="none" stroke="#474747" strokeWidth="3.300">{children}</svg>
);

export default function App() {
  return (
    <Desktop>
      <GlobalStyle />
      <MenuBar>
        <Menus>
          <FaApple size={32} />
          <AppName>Chrome</AppName>
          {['文件', '编辑', '显示', '历史记录', '书签', '个人资料', '标签页', '窗口', '帮助'].map(m => <span key={m}>{m}</span>)}
        </Menus>
        <Status>
          <svg width="36" height="34" viewBox="0 0 36 34"><path d="M2 0l7 7h18l7-7 1 15c2 10-7 19-17 19S-1 25 1 15z" fill="#15171f" /><path d="M11 13h14M18 13v16" stroke="#b7c3f4" strokeWidth="2.600" /></svg>
          <StatusItem $gap={39}>
            <svg width="30" height="30" viewBox="0 0 30 30" fill="#15171f"><path d="M14 14H7a7 7 0 1 1 7-7zM16 14h7a7 7 0 1 0-7-7zM14 16H7a7 7 0 1 0 7 7zM16 16h7a7 7 0 1 1-7 7z" /></svg>
          </StatusItem>
          <InputMethod>拼</InputMethod>
          <StatusItem $gap={39}><FaWeixin size={41} /></StatusItem>
          <StatusItem $gap={41}>
            <svg width="28" height="28" viewBox="0 0 28 28"><path d="M9 0C2 3-1 10 1 17c3 9 14 14 22 8 2-1.500 4-4 5-6.500C16 22 6 13 9 0z" fill="#15171f" /></svg>
          </StatusItem>
          <StatusItem $gap={44}>
            <svg width="36" height="26" viewBox="0 0 36 26" fill="none" stroke="#15171f" strokeWidth="4.200"><path d="M2 9.500c9-9 23-9 32 0M8 15.500c6-5.500 14-5.500 20 0" /><path d="M18 26l-5.500-6c3-2.600 8-2.600 11 0z" fill="#15171f" stroke="none" /></svg>
          </StatusItem>
          <StatusItem $gap={37} $size={20.8}>85%</StatusItem>
          <StatusItem $gap={11}>
            <svg width="51" height="24" viewBox="0 0 51 24"><rect x="1" y="1" width="44" height="22" rx="7" fill="none" stroke="#5f6784" strokeWidth="2" /><rect x="4" y="4" width="33" height="16" rx="4" fill="#15171f" /><path d="M47.500 8c3 1.500 3 6.500 0 8z" fill="#5f6784" /></svg>
          </StatusItem>
          <StatusItem $gap={38}>
            <svg width="26" height="27" viewBox="0 0 26 27"><rect x="1.300" y="1.300" width="23.400" height="10.400" rx="5.200" fill="none" stroke="#15171f" strokeWidth="2.600" /><circle cx="7" cy="6.500" r="3.200" fill="#15171f" /><rect y="14.500" width="26" height="12.500" rx="6.200" fill="#15171f" /><circle cx="19" cy="20.800" r="3.800" fill="#b7c3f4" /></svg>
          </StatusItem>
          <StatusItem $gap={37.5} $size={26.5}>9月26日 周五  13:42:44</StatusItem>
        </Status>
      </MenuBar>

      <Window>
        <TabStrip>
          <Lights><Light $color="#ec6a5e" /><Light $color="#f4bf4f" /><Light $color="#61c554" /></Lights>
          <PinnedTab><Pin /></PinnedTab>
          {tabs.map(([icon, title], i) => (
            <Tab key={i} $wide={i < 10}><Favicon>{icon}</Favicon><TabTitle>{title}</TabTitle></Tab>
          ))}
          <ActiveTab>
            <TabTitle $strong>N</TabTitle>
            <svg width="17" height="17" viewBox="0 0 17 17"><path d="M1.500 1.500l14 14M15.500 1.500l-14 14" stroke="#1f1f1f" strokeWidth="3" /></svg>
          </ActiveTab>
          <Tab $first><Favicon><Helix /></Favicon><TabTitle>Pr</TabTitle></Tab>
          <NewTab><Ico w={21} h={21}><path d="M10.500 0v21M0 10.500h21" strokeWidth="3" /></Ico></NewTab>
          <TabSearch><svg width="18" height="12" viewBox="0 0 18 12"><path d="M1.500 1.500L9 9l7.500-7.500" fill="none" stroke="#1f1f1f" strokeWidth="3.200" /></svg></TabSearch>
        </TabStrip>

        <Toolbar>
          <ToolButton><Ico w={24} h={24}><path d="M24 12H3M13 1.500L2.500 12 13 22.500" strokeWidth="3" /></Ico></ToolButton>
          <ToolButton><Ico w={26} h={26}><path d="M22 17.500A10.200 10.200 0 1 1 21 7" strokeWidth="3" /><path d="M14.500 9.500h9.500V0" strokeWidth="3" /></Ico></ToolButton>
          <Omnibox>
            <SiteInfo><Ico w={26} h={24}><circle cx="5.500" cy="5.500" r="3.800" strokeWidth="2.800" stroke="#1f1f1f" /><path d="M12 5.500h12M2 18.500h11" strokeWidth="2.800" stroke="#1f1f1f" /><circle cx="20" cy="18.500" r="3.800" strokeWidth="2.800" stroke="#1f1f1f" /></Ico></SiteInfo>
            <Url>blast.ncbi.nlm.nih.gov<span>/Blast.cgi</span></Url>
            <ToolButton $w={64}><Ico w={28} h={28}><circle cx="10.500" cy="10.500" r="8.800" strokeWidth="2.800" /><path d="M17 17l10 10M6 10.500h9" strokeWidth="2.800" /></Ico></ToolButton>
            <ToolButton $w={64}><Ico w={32} h={30}><path d="M16 3l3.800 9 9.700.8-7.400 6.400 2.300 9.500-8.400-5.100-8.400 5.100 2.300-9.500L2.500 12.800l9.700-.8z" strokeWidth="2.700" /></Ico></ToolButton>
          </Omnibox>
          <ToolButton><svg width="32" height="32" viewBox="0 0 32 32"><rect width="32" height="32" rx="5" fill="#2c5edb" /><path d="M6 5h20v11c0 6-5 9-10 12C11 25 6 22 6 16z" fill="#fff" /><path d="M16 8.500h7V16c0 4-3.500 6.500-7 8.500z" fill="#2c5edb" /></svg></ToolButton>
          <ToolButton><svg width="30" height="30" viewBox="0 0 30 30"><rect width="30" height="30" rx="5" fill="#d73a22" /><circle cx="8.500" cy="22" r="6" fill="#fff" /><circle cx="21.500" cy="22" r="6" fill="#fff" /></svg></ToolButton>
          <ToolButton><svg width="32" height="32" viewBox="0 0 32 32"><circle cx="16" cy="16" r="16" fill="#7d9e3a" /><path d="M16 8v16M8 16h16" stroke="#fff" strokeWidth="4.400" /></svg></ToolButton>
          <ToolButton><svg width="32" height="32" viewBox="0 0 32 32"><circle cx="16" cy="16" r="12" fill="#fff" stroke="#000" strokeWidth="8" /></svg></ToolButton>
          <ToolButton><svg width="32" height="32" viewBox="0 0 32 32"><path d="M17 1a15 15 0 1 0 14 17c-3-1-4-2-4-4-4 0-6-2-6-6-3-1-4-3-4-7z" fill="#c9844e" stroke="#4d2f1c" strokeWidth="1.400" /><circle cx="14" cy="8" r="2" fill="#e8c33c" stroke="#4d2f1c" /><circle cx="8" cy="17" r="1.800" fill="#9a6fc4" stroke="#4d2f1c" /><circle cx="15" cy="17" r="2" fill="#c0564c" stroke="#4d2f1c" /><circle cx="15" cy="25.500" r="2" fill="#42b3d5" stroke="#4d2f1c" /><circle cx="23" cy="21.500" r="1.800" fill="#e8c33c" stroke="#4d2f1c" /><circle cx="6" cy="11" r="1.500" fill="#42b3d5" /></svg></ToolButton>
          <ToolButton><Ico w={34} h={34}><path d="M4.500 7H12V6a3 3 0 0 1 6 0v1h9.500v8.500h1a3 3 0 0 1 0 6h-1V30.500h-23v-7c2-.3 3.500-2 3.500-4.300S6.500 15.300 4.500 15z" strokeWidth="3" strokeLinejoin="round" /></Ico></ToolButton>
          <ToolDivider />
          <ToolButton><Ico w={32} h={32}><path d="M16 0v21M7.500 13.500L16 22l8.500-8.500M1.500 21.500v8.700h29v-8.700" strokeWidth="3" /></Ico></ToolButton>
          <ToolButton>
            <svg width="40" height="40" viewBox="0 0 40 40"><clipPath id="av"><circle cx="20" cy="20" r="20" /></clipPath><g clipPath="url(#av)"><rect width="40" height="40" fill="#fbf3ee" /><path d="M1 24C1 10 9 2 20 2c9 0 16 6 17 18l-4 10-5-4-4-10-10 8-4 10-7-2z" fill="#b8683f" /><path d="M12 20l7-5 8 1 4 8-5 9-8 2-6-6z" fill="#f7dcc8" /><path d="M8 10c6-5 14-5 22 2M4 22c4-9 9-11 14-13M8 30l4-12M20 8l2 9M28 12l2 10" stroke="#8c472a" strokeWidth="1.500" fill="none" /><path d="M10 34l9 2 7-4 3 8H8z" fill="#fff" /><path d="M17 32l5 2 3 4-7-1zM6 32l6 5-6 2z" fill="#c9303c" /><path d="M29 2l8 7-1 16-5-7z" fill="#fbe9da" /><path d="M14 25l3 1M22 27l3-1" stroke="#7a3b26" strokeWidth="1.400" /></g></svg>
          </ToolButton>
          <ToolButton><svg width="8" height="28" viewBox="0 0 8 28" fill="#474747"><circle cx="4" cy="3.500" r="3.200" /><circle cx="4" cy="14" r="3.200" /><circle cx="4" cy="24.500" r="3.200" /></svg></ToolButton>
        </Toolbar>

        <Page>
          <ActionRow>
            <EditSearch>
              <svg width="12" height="20" viewBox="0 0 12 20"><path d="M10 2.500L3.500 10l6.500 7.500" fill="none" stroke="currentColor" strokeWidth="4.200" /></svg>
              Edit Search
            </EditSearch>
            <Action $gap={37}>Save Search</Action>
            <Action $gap={73}>Search Summary<Chevron w={20} /></Action>
            <HelpLinks>
              <HelpLink $color={VISITED}><Help s={28} />How to read this report?</HelpLink>
              <HelpLink $color={VISITED} $left={38}>
                <svg width="31" height="22" viewBox="0 0 31 22"><rect width="31" height="22" rx="5" fill="currentColor" /><path d="M12 6.500l8 4.500-8 4.500z" fill="#fff" /></svg>
                BLAST Help Videos
              </HelpLink>
              <HelpLink $color={BLUE} $left={37} $gap={1}>
                <svg width="28" height="28" viewBox="0 0 28 28" fill="none" stroke="currentColor" strokeWidth="3.600"><path d="M2 0v11h11" /><path d="M3 10C8 1 25 2 25.500 14.500 25.500 25 15 28 7 24" /></svg>
                Back to Traditional Results Page
              </HelpLink>
            </HelpLinks>
          </ActionRow>

          <Columns>
            <Summary>
              <SummaryRow $h={56}><Label>Job Title</Label><Value $bold>15 sequences (APOBEC3A_Homo_sapiens)</Value></SummaryRow>
              <SummaryRow $h={60}>
                <Label>RID</Label>
                <Value><Link>DC9TUSM4014</Link><Note $gap={20} $drop={2}>Search expires on 09-27 13:40 pm</Note><Link $gap={20}>Download All</Link><Mark $gap={8} $lift={3}><Chevron w={21} /></Mark></Value>
              </SummaryRow>
              <SummaryRow $h={65}>
                <Label>Results for</Label>
                <QuerySelect>1:lcl|Query_10852950 APOBEC3A_Homo_sapiens(199aa)<Chevron w={25} s={6} /></QuerySelect>
              </SummaryRow>
              <SummaryRow $h={60}>
                <Label>Program</Label>
                <Value>BLASTP<Mark $gap={8}><Help s={30} /></Mark><Link $gap={44}>Citation</Link><Mark $gap={8} $lift={3}><Chevron w={21} /></Mark></Value>
              </SummaryRow>
              <SummaryRow $h={60}>
                <Label>Database</Label>
                <Value>nr<Link $gap={44}>See details</Link><Mark $gap={8} $lift={3}><Chevron w={21} /></Mark></Value>
              </SummaryRow>
              <SummaryRow $h={56}><Label>Query ID</Label><Value>lcl|Query_10852950</Value></SummaryRow>
              <SummaryRow $h={56}><Label>Description</Label><Value>APOBEC3A_Homo_sapiens</Value></SummaryRow>
              <SummaryRow $h={56}><Label>Molecule type</Label><Value>amino acid</Value></SummaryRow>
              <SummaryRow $h={56}><Label>Query Length</Label><Value>199</Value></SummaryRow>
              <SummaryRow $h={56} $last>
                <Label>Other reports</Label>
                <Value><Link>Distance tree of results</Link><Link $gap={23}>Multiple alignment</Link><Link $gap={23}>MSA viewer</Link><Mark $gap={23}><Help s={30} /></Mark></Value>
              </SummaryRow>
            </Summary>

            <div>
              <FilterHeading>Filter Results</FilterHeading>
              <FilterPanel>
                <OrganismRow>
                  <b>Organism</b><Note $gap={25}>only top 20 will appear</Note>
                  <Exclude><EmptyCheck />exclude</Exclude>
                </OrganismRow>
                <Field $w={1033}>Type common  name, binomial, taxid or group  name</Field>
                <AddOrganism><FaPlus size={29} /><Link $color="#205493">Add organism</Link></AddOrganism>
                <Ranges>
                  {ranges.map(([name, w]) => (
                    <div key={name}>
                      <RangeLabel>{name}</RangeLabel>
                      <RangeInputs><Field $w={w} />to<Field $w={w} /></RangeInputs>
                    </div>
                  ))}
                </Ranges>
                <PanelButtons><PanelButton $solid>Filter</PanelButton><PanelButton>Reset</PanelButton></PanelButtons>
              </FilterPanel>
            </div>
          </Columns>

          <Notice><svg width="22" height="19" viewBox="0 0 22 19"><path d="M2 1l18 17M20 1L2 18" stroke="#888" strokeWidth="5.500" /></svg></Notice>

          <ResultTabs>
            <ResultTab $w={245} $active>Descriptions</ResultTab>
            <ResultTab $w={321}>Graphic Summary</ResultTab>
            <ResultTab $w={234}>Alignments</ResultTab>
            <ResultTab $w={220}>Taxonomy</ResultTab>
          </ResultTabs>
          <SectionBar>
            <h2>Sequences producing significant alignments</h2>
            <BarMenu $right={74}>Download<Chevron w={18} s={1.700} /></BarMenu>
            <BarMenu $right={34}>Select columns<Chevron w={18} s={1.700} /></BarMenu>
            Show
            <ShowSelect>100<Chevron w={25} s={6.500} /></ShowSelect>
            <Mark $gap={0}><Help s={28} /></Mark>
          </SectionBar>

          <ResultsPanel>
            <SelectRow>
              <CheckBox><Tick /></CheckBox>
              <SelectLabel>select all</SelectLabel>
              <Note $gap={28} $drop={2}>100 sequences selected</Note>
              <ViewLinks>
                <Link $color={VISITED}>GenPept</Link>
                <Link $color={VISITED} $gap={40}>Graphics</Link>
                <Link $color={VISITED} $gap={39.500}>Distance tree of results</Link>
                <Link $color={VISITED} $gap={39}>Multiple alignment</Link>
                <Link $color={VISITED} $gap={22}>MSA Viewer</Link>
              </ViewLinks>
            </SelectRow>
            <ResultTable>
              <HeadRow>
                <HeadCell $top={0} />
                {headers.map(h => (
                  <HeadCell key={h.t} $top={h.top} $right={h.right} $bold={h.bold}>{h.t}<SortArrow $active={h.bold} /></HeadCell>
                ))}
                <HeadCell $top={32} $right={0} $left={6} $color="#1b3a6f">Accession</HeadCell>
              </HeadRow>
              {hits.map(([d, score, cover, e, ident, len, acc]) => (
                <BodyRow key={acc}>
                  <CheckBox $left={8}><Tick /></CheckBox>
                  <Link>{d}</Link>
                  <Link>Homo sapiens</Link>
                  <Num>{score}</Num><Num>{score}</Num><Num $shift={8}>{cover}</Num><Num>{e}</Num><Num>{ident}</Num><Num>{len}</Num>
                  <AccessionCell><Link $color="#3b5f98">{acc}</Link></AccessionCell>
                </BodyRow>
              ))}
            </ResultTable>
          </ResultsPanel>
        </Page>

        <Feedback>
          <span>Feedback</span>
          <svg width="34" height="36" viewBox="0 0 34 36"><path d="M4 0h24q3 0 3 3v27l3 6H4q-3 0-3-3V3q0-3 3-3z" fill="#111" /><path d="M9 7v22M15 7v22M21 15v14" stroke="#f5d98b" strokeWidth="2.800" /></svg>
        </Feedback>
        <ToTop><svg width="47" height="27" viewBox="0 0 47 27"><path d="M23.500 0L47 27H0z" fill="#fff" /></svg></ToTop>
      </Window>

      <DockArea>
        <Dock>
          <DockDefs />
          <DockItem $running><Finder /></DockItem>
          <DockItem $running><PurpleNotes /></DockItem>
          <DockItem><Launchpad /></DockItem>
          <DockItem><Photos /></DockItem>
          <DockItem $running><WeChat /></DockItem>
          <DockItem $running><Calendar /></DockItem>
          <DockItem $running><VsCode /></DockItem>
          <DockItem><QQ /></DockItem>
          <DockItem $running><ChromeIcon /></DockItem>
          <DockItem $running><Mail /></DockItem>
          <DockItem $running><Terminal /></DockItem>
          <DockItem $running><Sublime /></DockItem>
          <DockItem $gap={0}><Phone /></DockItem>
          <DockDivider $left={33} $right={30} />
          <DockItem $running><Settings /><Badge>1</Badge></DockItem>
          <DockItem $running><Typora /></DockItem>
          <DockItem $running><Preview /></DockItem>
          <DockItem $running $gap={0}><CatIcon /></DockItem>
          <DockDivider $left={34} $right={29} />
          <DockItem $gap={28}><Papers /></DockItem>
          <DockItem $gap={0}><Trash /></DockItem>
        </Dock>
      </DockArea>
    </Desktop>
  );
}
